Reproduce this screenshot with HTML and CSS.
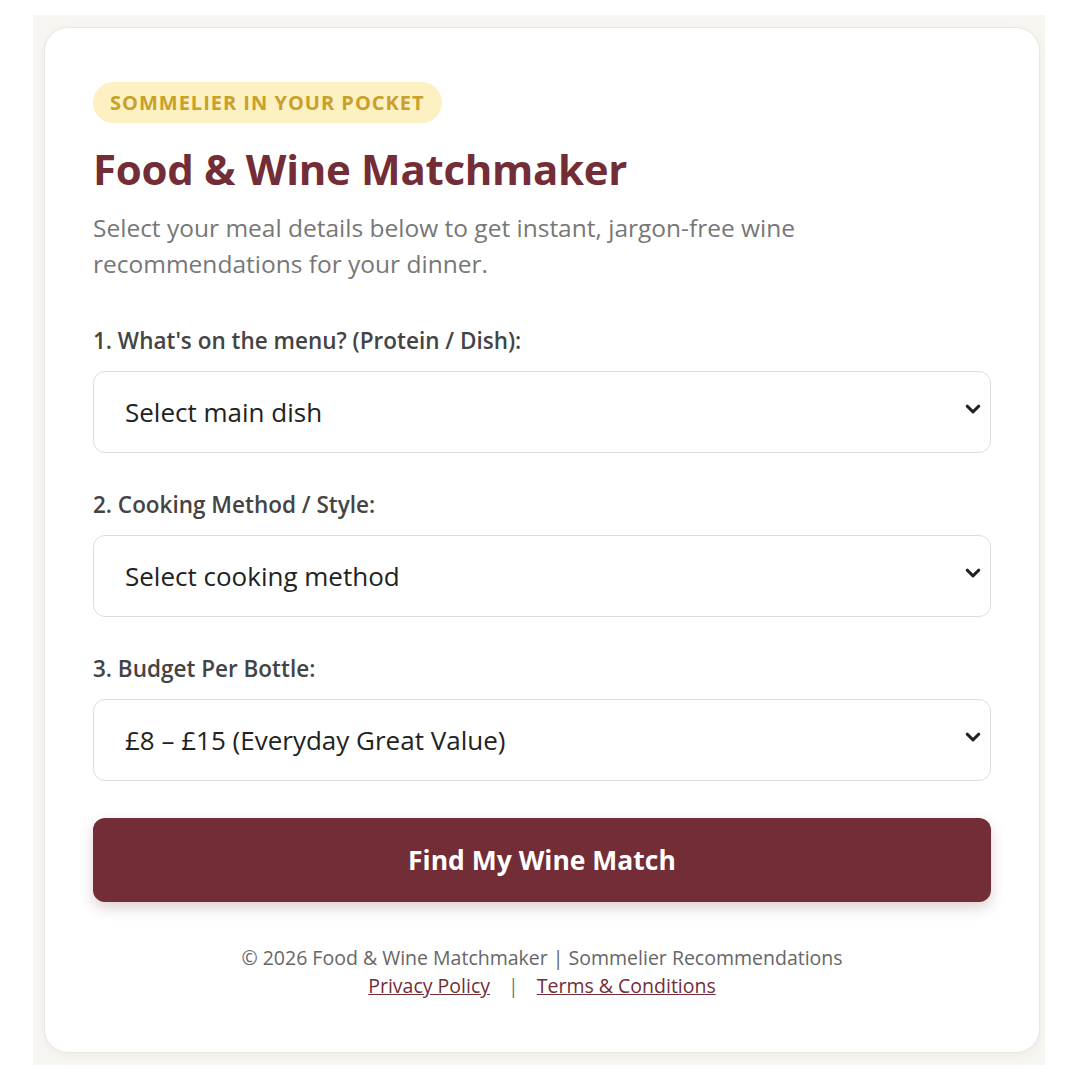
FILE: index.html
```html
<!DOCTYPE html>
<html lang="en">
<head>
<meta charset="utf-8">
<title>Food &amp; Wine Matchmaker</title>
<link rel="stylesheet" href="styles.css">
</head>
<body>
<div class="page">
  <main class="card">
    <span class="badge">Sommelier in your pocket</span>
    <h1 class="title">Food &amp; Wine Matchmaker</h1>
    <p class="intro">Select your meal details below to get instant, jargon-free wine recommendations for your dinner.</p>

    <form class="form">
      <div class="group">
        <label class="label" for="dish">1. What's on the menu? (Protein / Dish):</label>
        <div class="select-wrap">
          <select id="dish" class="select">
            <option>Select main dish</option>
          </select>
          <svg class="chev" viewBox="0 0 16 10" width="16" height="10"><path d="M2.2 2.2l5.8 5.6 5.8-5.6" fill="none" stroke="#222" stroke-width="3" stroke-linecap="round" stroke-linejoin="round"/></svg>
        </div>
      </div>
      <div class="group">
        <label class="label" for="method">2. Cooking Method / Style:</label>
        <div class="select-wrap">
          <select id="method" class="select">
            <option>Select cooking method</option>
          </select>
          <svg class="chev" viewBox="0 0 16 10" width="16" height="10"><path d="M2.2 2.2l5.8 5.6 5.8-5.6" fill="none" stroke="#222" stroke-width="3" stroke-linecap="round" stroke-linejoin="round"/></svg>
        </div>
      </div>
      <div class="group">
        <label class="label" for="budget">3. Budget Per Bottle:</label>
        <div class="select-wrap">
          <select id="budget" class="select">
            <option>£8 – £15 (Everyday Great Value)</option>
          </select>
          <svg class="chev" viewBox="0 0 16 10" width="16" height="10"><path d="M2.2 2.2l5.8 5.6 5.8-5.6" fill="none" stroke="#222" stroke-width="3" stroke-linecap="round" stroke-linejoin="round"/></svg>
        </div>
      </div>
      <button type="button" class="btn">Find My Wine Match</button>
    </form>

    <footer class="footer">
      <p class="copy">© 2026 Food &amp; Wine Matchmaker | Sommelier Recommendations</p>
      <p class="links"><a href="#">Privacy Policy</a><span class="sep">|</span><a href="#">Terms &amp; Conditions</a></p>
    </footer>
  </main>
</div>
</body>
</html>
```
FILE: styles.css
```css
* { box-sizing: border-box; }
html, body { margin: 0; padding: 0; background: #ffffff; }
body { font-family: "Open Sans", "Noto Sans", Arial, sans-serif; }

.page {
  margin: 15px 0 0 33px;
  width: 1012px;
  height: 1050px;
  background: #f8f6f2;
  padding: 12px 5px 12px 11px;
}

.card {
  height: 100%;
  background: #ffffff;
  border: 1px solid #ebe6df;
  border-radius: 24px;
  box-shadow: 0 2px 8px rgba(120, 100, 80, 0.08);
  padding: 54px 48px 0 48px;
}

.badge {
  display: inline-block;
  background: #fdf0c2;
  color: #c8a02a;
  font-weight: 700;
  font-size: 20px;
  line-height: 41px;
  height: 41px;
  padding: 0 17px;
  border-radius: 21px;
  text-transform: uppercase;
  letter-spacing: 1px;
}

.title {
  margin: 19px 0 0 0;
  color: #732d37;
  font-size: 42px;
  line-height: 54px;
  font-weight: 700;
  letter-spacing: -0.3px;
}

.intro {
  margin: 14px 0 0 0;
  color: #777777;
  font-size: 24.5px;
  line-height: 36px;
  max-width: 760px;
}

.form { margin-top: 44px; }

.group { margin-bottom: 37px; }

.label {
  display: block;
  color: #444444;
  font-weight: 600;
  font-size: 22.5px;
  line-height: 30px;
  margin-bottom: 15px;
}

.select-wrap { position: relative; }

.select {
  display: block;
  width: 100%;
  height: 82px;
  appearance: none;
  -webkit-appearance: none;
  background: #ffffff;
  border: 1px solid #dddddd;
  border-radius: 12px;
  padding: 0 31px;
  font-family: inherit;
  font-size: 26px;
  color: #222222;
}

.chev {
  position: absolute;
  right: 10px;
  top: 33px;
  width: 16px;
  height: 10px;
}

.btn {
  display: block;
  width: 100%;
  height: 84px;
  margin-top: 36px;
  border: 0;
  border-radius: 12px;
  background: #732d37;
  color: #ffffff;
  font-family: inherit;
  font-weight: 700;
  font-size: 26.5px;
  box-shadow: 0 6px 14px rgba(115, 45, 55, 0.22);
}

.footer {
  margin-top: 42px;
  text-align: center;
  color: #666666;
  font-size: 19.5px;
  line-height: 28px;
}

.footer p { margin: 0; }

.links a { color: #732d37; text-decoration: underline; }

.sep { margin: 0 18px; color: #777777; }
```
